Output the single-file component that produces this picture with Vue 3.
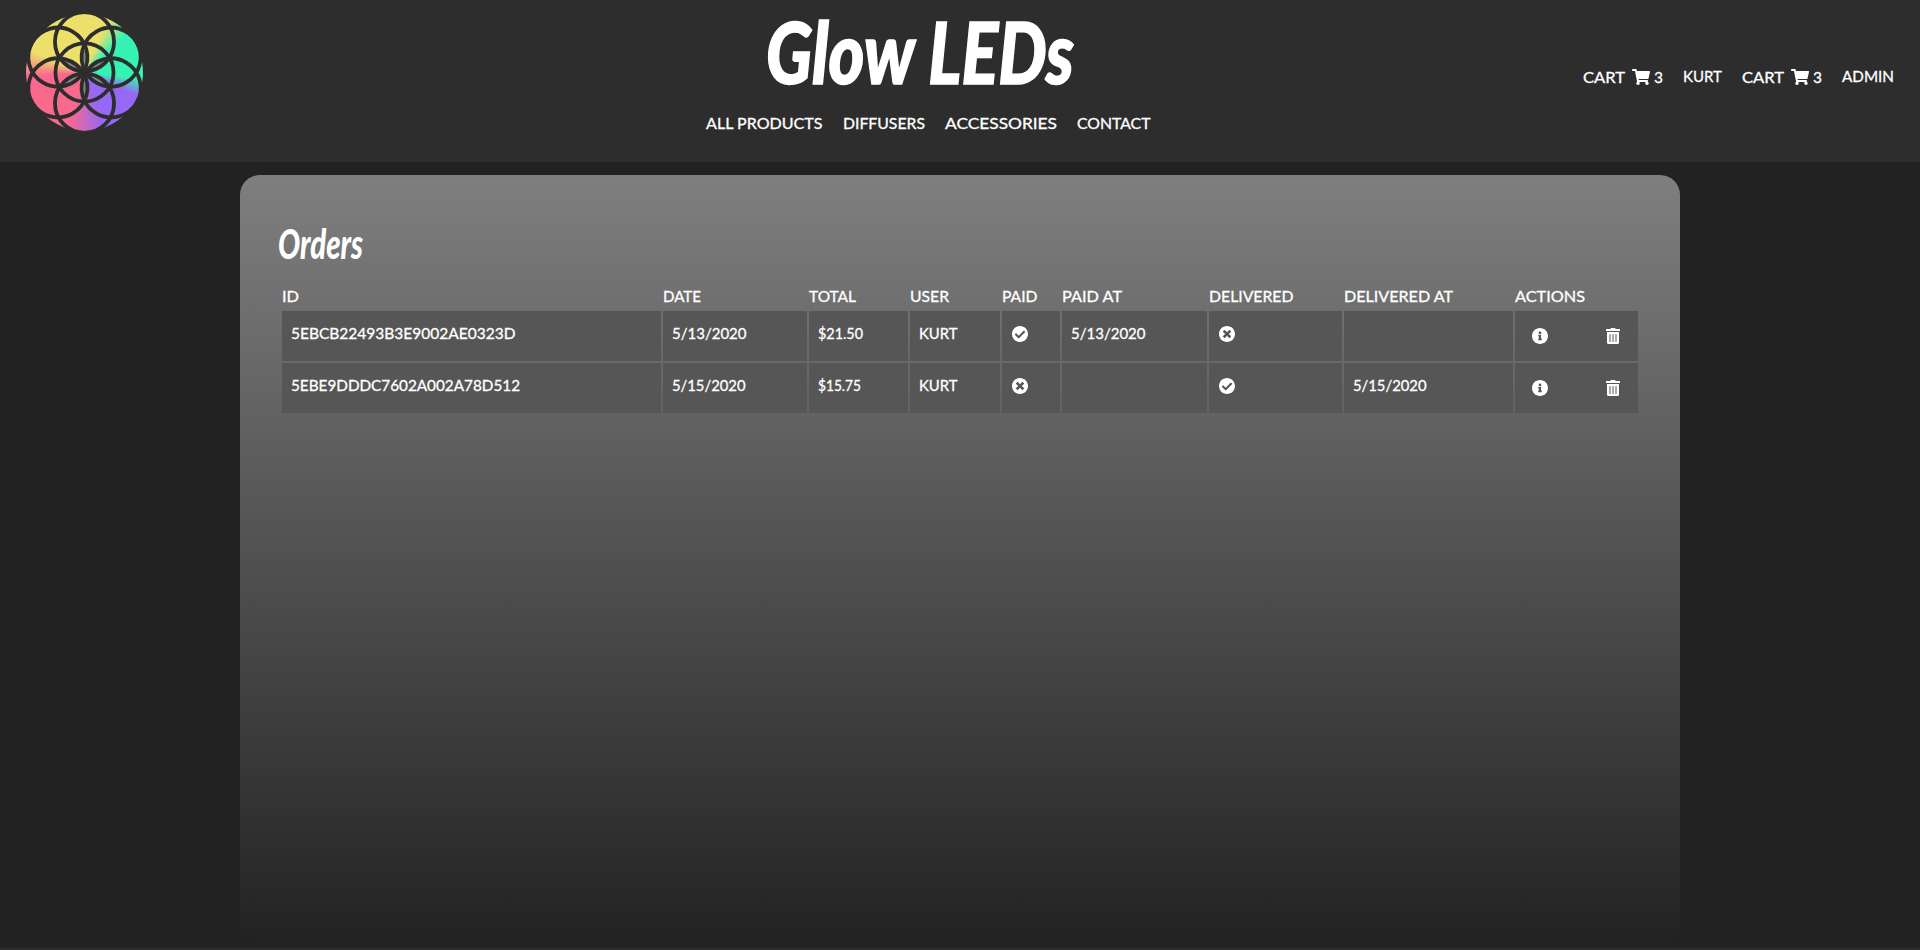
<script setup>
import { h } from 'vue'

// Label rendered on its baseline and set to an exact advance width.
const Label = (props) =>
  h('svg', { class: 'label', width: props.w, height: 11, style: 'display:block;overflow:visible;flex:none' }, [
    h('text', { x: 0, y: 11, textLength: props.w, lengthAdjust: 'spacingAndGlyphs' }, props.text),
  ])
Label.props = ['text', 'w']

const nav = [
  { text: 'ALL PRODUCTS', w: 116.5 },
  { text: 'DIFFUSERS', w: 82 },
  { text: 'ACCESSORIES', w: 112 },
  { text: 'CONTACT', w: 73.5 },
]

const account = [
  { text: 'CART', w: 42, count: '3' },
  { text: 'KURT', w: 39 },
  { text: 'CART', w: 42, count: '3' },
  { text: 'ADMIN', w: 52 },
]

const columns = [
  { text: 'ID', w: 17 },
  { text: 'DATE', w: 38 },
  { text: 'TOTAL', w: 47 },
  { text: 'USER', w: 39 },
  { text: 'PAID', w: 35.5 },
  { text: 'PAID AT', w: 60 },
  { text: 'DELIVERED', w: 84.5 },
  { text: 'DELIVERED AT', w: 109 },
  { text: 'ACTIONS', w: 70 },
]

const orders = [
  [
    { text: '5EBCB22493B3E9002AE0323D', w: 224.5 },
    { text: '5/13/2020', w: 74.5 },
    { text: '$21.50', w: 45 },
    { text: 'KURT', w: 38.5 },
    { icon: 'check' },
    { text: '5/13/2020', w: 74.5 },
    { icon: 'times' },
    {},
  ],
  [
    { text: '5EBE9DDDC7602A002A78D512', w: 229 },
    { text: '5/15/2020', w: 73.5 },
    { text: '$15.75', w: 43 },
    { text: 'KURT', w: 38.5 },
    { icon: 'times' },
    {},
    { icon: 'check' },
    { text: '5/15/2020', w: 73.5 },
  ],
]

const icons = {
  check:
    'M504 256c0 136.967-111.033 248-248 248S8 392.967 8 256 119.033 8 256 8s248 111.033 248 248zM227.314 387.314l184-184c6.248-6.248 6.248-16.379 0-22.627l-22.627-22.627c-6.248-6.249-16.379-6.249-22.628 0L216 308.118l-70.059-70.059c-6.248-6.248-16.379-6.248-22.628 0l-22.627 22.627c-6.248 6.248-6.248 16.379 0 22.627l104 104c6.249 6.249 16.379 6.249 22.628.001z',
  times:
    'M256 8C119 8 8 119 8 256s111 248 248 248 248-111 248-248S393 8 256 8zm121.6 313.1c4.7 4.7 4.7 12.3 0 17L338 377.6c-4.7 4.7-12.3 4.7-17 0L256 312l-65.1 65.6c-4.7 4.7-12.3 4.7-17 0L134.4 338c-4.7-4.7-4.7-12.3 0-17l65.6-65-65.6-65.1c-4.7-4.7-4.7-12.3 0-17l39.6-39.6c4.7-4.7 12.3-4.7 17 0l65 65.7 65.1-65.6c4.7-4.7 12.3-4.7 17 0l39.6 39.6c4.7 4.7 4.7 12.3 0 17L312 256l65.6 65.1z',
}
</script>

<template>
  <div class="page">
    <header class="header">
      <div class="emblem">
        <svg width="117" height="117" viewBox="-59 -59 118 118">
          <g class="lens">
            <ellipse
              v-for="a in [0, 60, 120, 180, 240, 300]"
              :key="a"
              cx="0"
              cy="-15.5"
              rx="1.6"
              ry="6.5"
              :transform="`rotate(${a})`"
            />
          </g>
          <g class="rings">
            <circle r="29.3" />
            <circle
              v-for="a in [0, 60, 120, 180, 240, 300]"
              :key="a"
              cy="-31"
              r="29.8"
              :transform="`rotate(${a})`"
            />
          </g>
        </svg>
      </div>

      <div class="brand">
        <svg class="wordmark" width="312" height="110">
          <text x="2" y="84" textLength="308" lengthAdjust="spacingAndGlyphs">Glow LEDs</text>
        </svg>
        <nav class="nav">
          <Label v-for="n in nav" :key="n.text" v-bind="n" />
        </nav>
      </div>

      <div class="account">
        <div v-for="(a, i) in account" :key="i" class="entry" :class="{ cart: a.count }">
          <Label :text="a.text" :w="a.w" />
          <template v-if="a.count">
            <svg class="cart-icon" width="18" height="16" viewBox="0 0 576 512">
              <path
                d="M528.12 301.319l47.273-208C578.806 78.301 567.391 64 551.99 64H159.208l-9.166-44.81C147.758 8.021 137.93 0 126.529 0H24C10.745 0 0 10.745 0 24v16c0 13.255 10.745 24 24 24h69.883l70.248 343.435C147.325 417.1 136 435.222 136 456c0 30.928 25.072 56 56 56s56-25.072 56-56c0-15.674-6.447-29.835-16.824-40h209.647C430.447 426.165 424 440.326 424 456c0 30.928 25.072 56 56 56s56-25.072 56-56c0-22.172-12.888-41.332-31.579-50.405l5.517-24.276c3.413-15.018-8.002-29.319-23.403-29.319H218.117l-6.545-32h293.145c11.206 0 20.92-7.754 23.403-18.681z"
              />
            </svg>
            <Label :text="a.count" w="9" />
          </template>
        </div>
      </div>
    </header>

    <main class="panel">
      <svg class="heading" width="90" height="36">
        <text x="0" y="31" textLength="85" lengthAdjust="spacingAndGlyphs">Orders</text>
      </svg>
      <div class="grid heads">
        <Label v-for="c in columns" :key="c.text" v-bind="c" />
      </div>
      <div class="rows">
        <div v-for="(row, r) in orders" :key="r" class="grid">
          <div v-for="(cell, c) in row" :key="c" class="cell">
            <Label v-if="cell.text" v-bind="cell" />
            <svg v-if="cell.icon" class="state" width="16" height="16" viewBox="8 8 496 496">
              <path :d="icons[cell.icon]" />
            </svg>
          </div>
          <div class="cell actions">
            <svg width="16" height="16" viewBox="8 8 496 496">
              <path
                d="M256 8C119.043 8 8 119.083 8 256c0 136.997 111.043 248 248 248s248-111.003 248-248C504 119.083 392.957 8 256 8zm0 110c23.196 0 42 18.804 42 42s-18.804 42-42 42-42-18.804-42-42 18.804-42 42-42zm56 254c0 6.627-5.373 12-12 12h-88c-6.627 0-12-5.373-12-12v-24c0-6.627 5.373-12 12-12h12v-64h-12c-6.627 0-12-5.373-12-12v-24c0-6.627 5.373-12 12-12h64c6.627 0 12 5.373 12 12v100h12c6.627 0 12 5.373 12 12v24z"
              />
            </svg>
            <svg width="14" height="16" viewBox="0 0 448 512">
              <path
                d="M32 464a48 48 0 0 0 48 48h288a48 48 0 0 0 48-48V128H32zm272-256a16 16 0 0 1 32 0v224a16 16 0 0 1-32 0zm-96 0a16 16 0 0 1 32 0v224a16 16 0 0 1-32 0zm-96 0a16 16 0 0 1 32 0v224a16 16 0 0 1-32 0zM432 32H312l-9.4-18.7A24 24 0 0 0 281.1 0H166.8a23.72 23.72 0 0 0-21.4 13.3L136 32H16A16 16 0 0 0 0 48v32a16 16 0 0 0 16 16h416a16 16 0 0 0 16-16V48a16 16 0 0 0-16-16z"
              />
            </svg>
          </div>
        </div>
      </div>
    </main>
    <footer class="footer"></footer>
  </div>
</template>

<style>
body {
  background: #222;
}
</style>

<style scoped>
.page {
  height: 950px;
  overflow: hidden;
  display: flex;
  flex-direction: column;
  background: #222;
  font-family: Lato, 'Open Sans', sans-serif;
  font-size: 15.5px;
  font-weight: 400;
}
svg {
  display: block;
  flex: none;
  overflow: visible;
  fill: #fff;
}
.page :deep(.label) {
  fill: #fff;
  stroke: #fff;
  stroke-width: 0.3px;
}
.header {
  flex: none;
  box-sizing: border-box;
  height: 162px;
  display: grid;
  grid-template-columns: 680px 877px auto;
  padding-left: 26px;
  background: #2d2d2d;
}
.emblem {
  width: 117px;
  height: 117px;
  margin: 13.5px 0 0 0;
  border-radius: 50%;
  background: conic-gradient(
    #ece06a 0deg,
    #ece06a 24deg,
    #37f2b5 48deg,
    #37f2b5 96deg,
    #9668f3 114deg,
    #9668f3 160deg,
    #f9698e 198deg,
    #f9698e 266deg,
    #ece06a 292deg
  );
}
.rings {
  fill: none;
  stroke: #2d2d2d;
  stroke-width: 3.8px;
}
.lens {
  fill: #858585;
}
.wordmark {
  margin-left: 58px;
  font-size: 85px;
  font-weight: 900;
  font-style: italic;
  stroke: #fff;
  stroke-width: 1.5px;
}
.nav {
  display: flex;
  gap: 20px;
  margin-top: 8px;
}
.account {
  display: flex;
  gap: 20px;
  margin-top: 69px;
}
.entry {
  display: flex;
  align-items: flex-start;
  padding-top: 2px;
  height: 16px;
}
.entry.cart {
  padding-top: 3px;
}
.cart-icon {
  margin: -3px 4px 0 7px;
}
.panel {
  flex: none;
  box-sizing: border-box;
  width: 1440px;
  height: 770px;
  margin: 13px auto 0;
  padding: 53px 42px 0;
  border-radius: 20px;
  background: linear-gradient(180deg, #7f7f7f 0%, #222 100%);
}
.heading {
  margin-left: -4px;
  font-size: 41px;
  font-weight: 900;
  font-style: italic;
}
.grid {
  display: grid;
  grid-template-columns: 379px 144px 99px 90px 58px 145px 133px 169px 123px;
  column-gap: 2px;
}
.heads {
  margin-top: 27px;
}
.rows {
  display: grid;
  gap: 2px;
  margin-top: 9px;
}
.cell {
  box-sizing: border-box;
  height: 50px;
  padding: 17px 0 0 9px;
  background: #565656;
}
.state {
  margin: -2px 0 0 1px;
}
.actions {
  display: flex;
  justify-content: space-between;
  padding: 17px 18px 0 17px;
}
.footer {
  flex: none;
  height: 2px;
  margin-top: 3px;
  background: #2d2d2d;
}
</style>
